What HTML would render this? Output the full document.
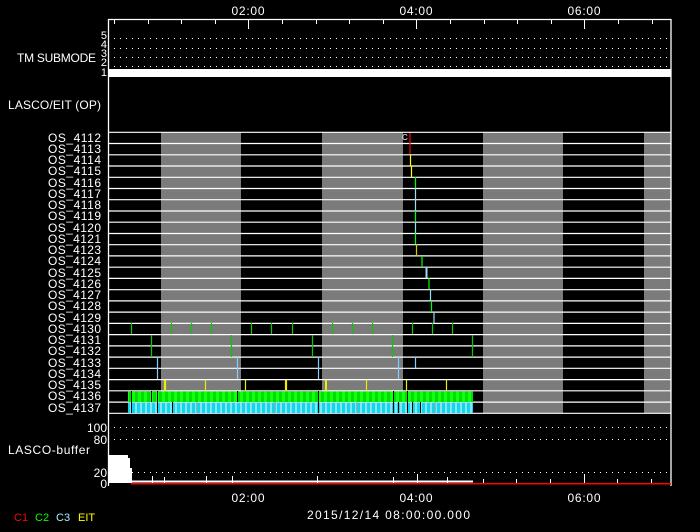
<!DOCTYPE html>
<html><head><meta charset="utf-8"><style>
html,body{margin:0;padding:0;background:#000;width:700px;height:532px;overflow:hidden}
svg{display:block}
text{font-family:"Liberation Sans",sans-serif;fill:#fff;font-size:12px}
</style></head><body>
<svg width="700" height="532" viewBox="0 0 700 532" xmlns="http://www.w3.org/2000/svg">
<text x="248" y="15" text-anchor="middle" textLength="33">02:00</text>
<text x="416" y="15" text-anchor="middle" textLength="33">04:00</text>
<text x="584" y="15" text-anchor="middle" textLength="33">06:00</text>
<g fill="#7b7b7b">
<rect x="161" y="132" width="80" height="281"/>
<rect x="322" y="132" width="81" height="281"/>
<rect x="483" y="132" width="80" height="281"/>
<rect x="644" y="132" width="27" height="281"/>
</g>
<g stroke="#fff" stroke-width="1" stroke-dasharray="1 5">
<line x1="114" y1="38.5" x2="671" y2="38.5"/>
<line x1="114" y1="48.5" x2="671" y2="48.5"/>
<line x1="114" y1="57.5" x2="671" y2="57.5"/>
<line x1="114" y1="66.5" x2="671" y2="66.5"/>
<line x1="114" y1="427.5" x2="671" y2="427.5"/>
<line x1="114" y1="439.5" x2="671" y2="439.5"/>
<line x1="114" y1="472.5" x2="671" y2="472.5"/>
</g>
<rect x="108" y="69" width="563" height="8" fill="#fff"/>
<g stroke="#fff" stroke-width="1.3" fill="none">
<line x1="108" y1="19.5" x2="671" y2="19.5"/>
<line x1="108.5" y1="19" x2="108.5" y2="486"/>
<line x1="671" y1="19" x2="671" y2="486"/>
</g>
<g stroke="#fff" stroke-width="1">
<line x1="114.5" y1="19" x2="114.5" y2="24"/>
<line x1="148.5" y1="19" x2="148.5" y2="24"/>
<line x1="181.5" y1="19" x2="181.5" y2="24"/>
<line x1="215.5" y1="19" x2="215.5" y2="24"/>
<line x1="248.5" y1="19" x2="248.5" y2="29"/>
<line x1="282.5" y1="19" x2="282.5" y2="24"/>
<line x1="316.5" y1="19" x2="316.5" y2="24"/>
<line x1="349.5" y1="19" x2="349.5" y2="24"/>
<line x1="383.5" y1="19" x2="383.5" y2="24"/>
<line x1="416.5" y1="19" x2="416.5" y2="29"/>
<line x1="450.5" y1="19" x2="450.5" y2="24"/>
<line x1="484.5" y1="19" x2="484.5" y2="24"/>
<line x1="517.5" y1="19" x2="517.5" y2="24"/>
<line x1="551.5" y1="19" x2="551.5" y2="24"/>
<line x1="584.5" y1="19" x2="584.5" y2="29"/>
<line x1="618.5" y1="19" x2="618.5" y2="24"/>
<line x1="652.5" y1="19" x2="652.5" y2="24"/>
</g>
<text x="96" y="62" text-anchor="end" textLength="79">TM SUBMODE</text>
<g text-anchor="end">
<text x="107" y="39" style="font-size:11px">5</text>
<text x="107" y="48" style="font-size:11px">4</text>
<text x="107" y="57" style="font-size:11px">3</text>
<text x="107" y="66" style="font-size:11px">2</text>
<text x="107" y="76" style="font-size:11px">1</text>
</g>
<text x="8" y="109" textLength="93">LASCO/EIT (OP)</text>
<g stroke="#fff" stroke-width="1.2">
<line x1="108" y1="132.3" x2="671" y2="132.3"/>
<line x1="108" y1="143.5" x2="671" y2="143.5"/>
<line x1="108" y1="154.8" x2="671" y2="154.8"/>
<line x1="108" y1="166" x2="671" y2="166"/>
<line x1="108" y1="177.3" x2="671" y2="177.3"/>
<line x1="108" y1="188.5" x2="671" y2="188.5"/>
<line x1="108" y1="199.7" x2="671" y2="199.7"/>
<line x1="108" y1="211" x2="671" y2="211"/>
<line x1="108" y1="222.2" x2="671" y2="222.2"/>
<line x1="108" y1="233.5" x2="671" y2="233.5"/>
<line x1="108" y1="244.7" x2="671" y2="244.7"/>
<line x1="108" y1="255.9" x2="671" y2="255.9"/>
<line x1="108" y1="267.2" x2="671" y2="267.2"/>
<line x1="108" y1="278.4" x2="671" y2="278.4"/>
<line x1="108" y1="289.7" x2="671" y2="289.7"/>
<line x1="108" y1="300.9" x2="671" y2="300.9"/>
<line x1="108" y1="312.1" x2="671" y2="312.1"/>
<line x1="108" y1="323.4" x2="671" y2="323.4"/>
<line x1="108" y1="334.6" x2="671" y2="334.6"/>
<line x1="108" y1="345.9" x2="671" y2="345.9"/>
<line x1="108" y1="357.1" x2="671" y2="357.1"/>
<line x1="108" y1="368.3" x2="671" y2="368.3"/>
<line x1="108" y1="379.6" x2="671" y2="379.6"/>
<line x1="108" y1="390.8" x2="671" y2="390.8"/>
<line x1="108" y1="402.1" x2="671" y2="402.1"/>
<line x1="108" y1="413.3" x2="671" y2="413.3"/>
</g>
<g text-anchor="end">
<text x="101" y="142" textLength="53">OS_4112</text>
<text x="101" y="153" textLength="53">OS_4113</text>
<text x="101" y="164" textLength="53">OS_4114</text>
<text x="101" y="175" textLength="53">OS_4115</text>
<text x="101" y="187" textLength="53">OS_4116</text>
<text x="101" y="198" textLength="53">OS_4117</text>
<text x="101" y="209" textLength="53">OS_4118</text>
<text x="101" y="220" textLength="53">OS_4119</text>
<text x="101" y="232" textLength="53">OS_4120</text>
<text x="101" y="243" textLength="53">OS_4121</text>
<text x="101" y="254" textLength="53">OS_4123</text>
<text x="101" y="265" textLength="53">OS_4124</text>
<text x="101" y="277" textLength="53">OS_4125</text>
<text x="101" y="288" textLength="53">OS_4126</text>
<text x="101" y="299" textLength="53">OS_4127</text>
<text x="101" y="310" textLength="53">OS_4128</text>
<text x="101" y="322" textLength="53">OS_4129</text>
<text x="101" y="333" textLength="53">OS_4130</text>
<text x="101" y="344" textLength="53">OS_4131</text>
<text x="101" y="355" textLength="53">OS_4132</text>
<text x="101" y="367" textLength="53">OS_4133</text>
<text x="101" y="378" textLength="53">OS_4134</text>
<text x="101" y="389" textLength="53">OS_4135</text>
<text x="101" y="400" textLength="53">OS_4136</text>
<text x="101" y="412" textLength="53">OS_4137</text>
</g>
<text x="402" y="140" style="font-size:8px">C</text>
<g stroke-width="1.2">
<line x1="410" y1="133" x2="410" y2="154" stroke="#f00"/>
<line x1="410.5" y1="155" x2="410.5" y2="166" stroke="#ff0"/>
<line x1="411.5" y1="166" x2="411.5" y2="177" stroke="#ff0"/>
<line x1="415.5" y1="177" x2="415.5" y2="188" stroke="#0f0"/>
<line x1="415.5" y1="188" x2="415.5" y2="211" stroke="#9de"/>
<line x1="415.5" y1="211" x2="415.5" y2="222" stroke="#0f0"/>
<line x1="415.5" y1="222" x2="415.5" y2="233" stroke="#9de"/>
<line x1="415.5" y1="233" x2="415.5" y2="244" stroke="#0f0"/>
<line x1="416.5" y1="244" x2="416.5" y2="256" stroke="#cc0"/>
<line x1="422" y1="256" x2="422" y2="267" stroke="#0f0"/>
<line x1="426.5" y1="267" x2="426.5" y2="278" stroke="#9de" stroke-width="2"/>
<line x1="429" y1="278" x2="429" y2="289" stroke="#0f0"/>
<line x1="430.5" y1="289" x2="430.5" y2="301" stroke="#9de"/>
<line x1="431.5" y1="301" x2="431.5" y2="312" stroke="#0f0"/>
<line x1="434" y1="312" x2="434" y2="323" stroke="#9de"/>
</g>
<g stroke="#0c0" stroke-width="1.2">
<line x1="131.5" y1="323" x2="131.5" y2="334"/><line x1="171.5" y1="323" x2="171.5" y2="334"/>
<line x1="191.5" y1="323" x2="191.5" y2="334"/><line x1="211.5" y1="323" x2="211.5" y2="334"/>
<line x1="251.5" y1="323" x2="251.5" y2="334"/><line x1="271.5" y1="323" x2="271.5" y2="334"/>
<line x1="292.5" y1="323" x2="292.5" y2="334"/><line x1="332.5" y1="323" x2="332.5" y2="334"/>
<line x1="352.5" y1="323" x2="352.5" y2="334"/><line x1="372.5" y1="323" x2="372.5" y2="334"/>
<line x1="412.5" y1="323" x2="412.5" y2="334"/><line x1="432.5" y1="323" x2="432.5" y2="334"/>
<line x1="452.5" y1="323" x2="452.5" y2="334"/>
<line x1="151.5" y1="335" x2="151.5" y2="357"/><line x1="231.5" y1="335" x2="231.5" y2="357"/>
<line x1="312.5" y1="335" x2="312.5" y2="357"/><line x1="392.5" y1="335" x2="392.5" y2="357"/>
<line x1="472.5" y1="335" x2="472.5" y2="357"/>
</g>
<g stroke="#8cf" stroke-width="1.2">
<line x1="157.5" y1="357" x2="157.5" y2="379"/><line x1="237.5" y1="357" x2="237.5" y2="379"/>
<line x1="318.5" y1="357" x2="318.5" y2="379"/><line x1="398.5" y1="357" x2="398.5" y2="379"/>
<line x1="415.5" y1="357" x2="415.5" y2="368"/>
</g>
<g stroke="#ee0" stroke-width="1.2">
<line x1="165" y1="380" x2="165" y2="391" stroke-width="2.2"/><line x1="205.5" y1="380" x2="205.5" y2="391"/>
<line x1="245.5" y1="380" x2="245.5" y2="391"/><line x1="286" y1="380" x2="286" y2="391" stroke-width="2.2"/>
<line x1="326" y1="380" x2="326" y2="391" stroke-width="2"/><line x1="366.5" y1="380" x2="366.5" y2="391"/>
<line x1="406.5" y1="380" x2="406.5" y2="391"/><line x1="446.5" y1="380" x2="446.5" y2="391"/>
</g>
<defs>
<pattern id="gp" width="6" height="11" patternUnits="userSpaceOnUse"><rect width="6" height="11" fill="#0d0"/><rect width="3" height="11" fill="#1f1"/></pattern>
<pattern id="cp" width="5" height="11" patternUnits="userSpaceOnUse"><rect width="5" height="11" fill="#0cd8f0"/><rect width="2" height="11" fill="#8ae4f0"/></pattern>
</defs>
<rect x="128" y="391.5" width="345" height="10.5" fill="url(#gp)"/>
<rect x="128" y="402.7" width="345" height="10.5" fill="url(#cp)"/>
<g stroke="#000" stroke-width="1">
<line x1="131.5" y1="391" x2="131.5" y2="413"/><line x1="151.5" y1="391" x2="151.5" y2="402"/>
<line x1="157.5" y1="391" x2="157.5" y2="413"/><line x1="172.5" y1="402" x2="172.5" y2="413"/>
<line x1="237.5" y1="391" x2="237.5" y2="402"/><line x1="318.5" y1="391" x2="318.5" y2="413"/>
<line x1="393.5" y1="391" x2="393.5" y2="413"/><line x1="398.5" y1="402" x2="398.5" y2="413"/>
<line x1="407.5" y1="391" x2="407.5" y2="413"/><line x1="412.5" y1="402" x2="412.5" y2="413"/>
<line x1="420.5" y1="402" x2="420.5" y2="413"/>
</g>
<g stroke="#aaa" stroke-width="1">
<line x1="196.5" y1="402" x2="196.5" y2="413"/><line x1="275.5" y1="402" x2="275.5" y2="413"/>
<line x1="356.5" y1="402" x2="356.5" y2="413"/><line x1="435.5" y1="402" x2="435.5" y2="413"/>
</g>
<text x="8" y="454" textLength="82">LASCO-buffer</text>
<g text-anchor="end">
<text x="107" y="432">100</text>
<text x="107" y="444">80</text>
<text x="107" y="477">20</text>
<text x="107" y="488">0</text>
</g>
<polygon points="109,455 128,455 128,458 130,458 130,468 132,468 132,483 109,483" fill="#fff"/>
<rect x="131" y="480.5" width="342" height="2" fill="#fff"/>
<g stroke="#fff" stroke-width="1">
<line x1="152.5" y1="476" x2="152.5" y2="483"/><line x1="164.5" y1="477" x2="164.5" y2="483"/>
<line x1="206.5" y1="476" x2="206.5" y2="483"/><line x1="232.5" y1="476" x2="232.5" y2="483"/>
<line x1="317.5" y1="476" x2="317.5" y2="483"/><line x1="393.5" y1="477" x2="393.5" y2="483"/>
<line x1="417.5" y1="474" x2="417.5" y2="483"/><line x1="447.5" y1="477" x2="447.5" y2="483"/>
<line x1="483.5" y1="479" x2="483.5" y2="483"/><line x1="516.5" y1="479" x2="516.5" y2="483"/>
<line x1="550.5" y1="479" x2="550.5" y2="483"/><line x1="584.5" y1="474" x2="584.5" y2="483"/>
<line x1="617.5" y1="479" x2="617.5" y2="483"/><line x1="651.5" y1="479" x2="651.5" y2="483"/>
</g>
<rect x="131" y="483" width="540" height="1.5" fill="#f00"/>
<text x="248" y="502" text-anchor="middle" textLength="33">02:00</text>
<text x="416" y="502" text-anchor="middle" textLength="33">04:00</text>
<text x="584" y="502" text-anchor="middle" textLength="33">06:00</text>
<text x="307" y="519" textLength="163">2015/12/14 08:00:00.000</text>
<text x="14" y="521" style="fill:#f00;font-size:11px">C1</text>
<text x="35" y="521" style="fill:#0f0;font-size:11px">C2</text>
<text x="56" y="521" style="fill:#aef;font-size:11px">C3</text>
<text x="78" y="521" style="fill:#ff0;font-size:11px">EIT</text>
</svg>
</body></html>
